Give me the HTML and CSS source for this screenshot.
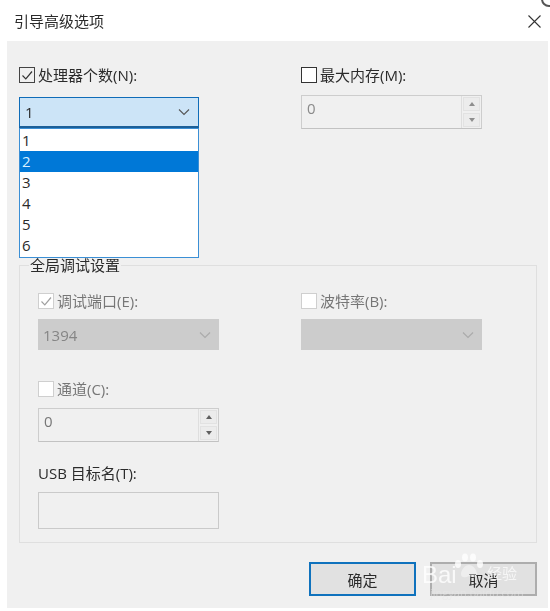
FILE: index.html
```html
<!DOCTYPE html>
<html lang="zh-CN">
<head>
<meta charset="utf-8">
<title>引导高级选项</title>
<link rel="stylesheet" href="styles.css">
</head>
<body>
<div class="dialog">
  <svg class="corner-mark" width="12" height="12" viewBox="0 0 12 12"><circle cx="11" cy="-1" r="7" fill="none" stroke="#555" stroke-width="2"/></svg>
  <header class="titlebar">
    <span class="title">引导高级选项</span>
    <svg class="close" width="13" height="13" viewBox="0 0 13 13"><path d="M0.5 0.5L12.5 12.5M12.5 0.5L0.5 12.5" stroke="#333" stroke-width="1.1" fill="none"/></svg>
  </header>
  <main class="panel">
    <div class="top-row">
      <div class="col-left">
        <label class="check-row">
          <span class="box box-on"><svg width="14" height="14" viewBox="0 0 14 14"><path d="M2.5 7.5L5.8 10.8L12 3.5" stroke="#333" stroke-width="1.2" fill="none"/></svg></span>
          <span>处理器个数(N):</span>
        </label>
        <div class="select select-open">
          <span>1</span>
          <svg width="12" height="8" viewBox="0 0 12 8"><path d="M1 1.5L6 6.5L11 1.5" stroke="#555" stroke-width="1.1" fill="none"/></svg>
        </div>
        <ul class="dropdown">
          <li>1</li>
          <li class="selected">2</li>
          <li>3</li>
          <li>4</li>
          <li>5</li>
          <li>6</li>
        </ul>
      </div>
      <div class="col-right">
        <label class="check-row">
          <span class="box box-dark"></span>
          <span>最大内存(M):</span>
        </label>
        <div class="spin spin-tall">
          <span class="spin-value">0</span>
          <span class="spin-btns">
            <span class="spin-btn"><i class="arrow-up"></i></span>
            <span class="spin-btn"><i class="arrow-down"></i></span>
          </span>
        </div>
      </div>
    </div>

    <fieldset class="group">
      <legend>全局调试设置</legend>
      <div class="group-grid">
        <div class="group-left">
          <label class="check-row muted">
            <span class="box box-muted"><svg width="14" height="14" viewBox="0 0 14 14"><path d="M2.5 7.5L5.8 10.8L12 3.5" stroke="#a0a0a0" stroke-width="1.2" fill="none"/></svg></span>
            <span>调试端口(E):</span>
          </label>
          <div class="select select-off">
            <span>1394</span>
            <svg width="12" height="8" viewBox="0 0 12 8"><path d="M1 1.5L6 6.5L11 1.5" stroke="#aaa" stroke-width="1.1" fill="none"/></svg>
          </div>
          <label class="check-row muted channel">
            <span class="box box-muted"></span>
            <span>通道(C):</span>
          </label>
          <div class="spin spin-channel">
            <span class="spin-value">0</span>
            <span class="spin-btns">
              <span class="spin-btn"><i class="arrow-up dark"></i></span>
              <span class="spin-btn"><i class="arrow-down dark"></i></span>
            </span>
          </div>
          <div class="usb-label">USB 目标名(T):</div>
          <div class="usb-field"></div>
        </div>
        <div class="group-right">
          <label class="check-row muted">
            <span class="box box-muted"></span>
            <span>波特率(B):</span>
          </label>
          <div class="select select-off">
            <span></span>
            <svg width="12" height="8" viewBox="0 0 12 8"><path d="M1 1.5L6 6.5L11 1.5" stroke="#aaa" stroke-width="1.1" fill="none"/></svg>
          </div>
        </div>
      </div>
    </fieldset>

    <footer class="actions">
      <button class="btn btn-primary" type="button">确定</button>
      <button class="btn" type="button">取消</button>
    </footer>
  </main>

  <div class="watermark">
    <svg class="paw" width="30" height="32" viewBox="0 0 30 32">
      <g fill="#fff" opacity="0.8">
        <ellipse cx="4" cy="11" rx="3" ry="4"/>
        <ellipse cx="11" cy="4.5" rx="3" ry="4"/>
        <ellipse cx="19" cy="4.5" rx="3" ry="4"/>
        <ellipse cx="26" cy="11" rx="3" ry="4"/>
        <path d="M15 12c4 0 8 5 8 9 0 4-4 4-8 2-4 2-8 2-8-2 0-4 4-9 8-9z" opacity="0.55"/>
      </g>
    </svg>
    <span class="wm-bai">Bai</span>
    <span class="wm-jy">经验</span>
    <span class="wm-url">jingyan.baidu.com</span>
  </div>
</div>
</body>
</html>
```
FILE: styles.css
```css
* { box-sizing: border-box; }
html, body { margin: 0; padding: 0; background: #fff; }
body {
  width: 550px;
  height: 611px;
  overflow: hidden;
  font-family: "Open Sans", "Noto Sans CJK SC", sans-serif;
  font-size: 15px;
  color: #2b2b2b;
}
.dialog { position: relative; width: 550px; height: 611px; filter: blur(0.35px); }
.corner-mark { position: absolute; right: 0; top: 0; }
.titlebar {
  height: 41px;
  display: flex;
  align-items: center;
  justify-content: space-between;
  padding: 0 9px 0 14px;
}
.title { font-size: 15px; line-height: 20px; }
.close { display: block; margin-top: 2px; }
.panel {
  margin-left: 7px;
  margin-right: 2px;
  height: 567px;
  background: #f0f0f0;
  padding: 26px 11px 0 12px;
}
.top-row { display: flex; gap: 102px; height: 188px; }
.col-left { width: 180px; position: relative; }
.col-right { width: 181px; }
.check-row {
  display: flex;
  align-items: center;
  gap: 3px;
  height: 16px;
  line-height: 15px;
  white-space: nowrap;
}
.muted { color: #767676; }
.box {
  width: 16px;
  height: 16px;
  flex: none;
  display: flex;
  align-items: center;
  justify-content: center;
  background: #fff;
  border: 1px solid #444;
}
.box-on { background: #f0f0f0; }
.box-dark { background: #fff; border-color: #333; }
.box-muted { border-color: #cfcfcf; background: #fff; }
.select {
  height: 31px;
  display: flex;
  align-items: center;
  justify-content: space-between;
  padding: 0 8px 0 5px;
}
.select-open {
  margin-top: 14px;
  background: #cce4f7;
  border: 1px solid #0f6cb8;
  border-bottom: 2px solid #1b5f98;
}
.select-off {
  margin-top: 10px;
  background: #cccccc;
  color: #858585;
  padding-left: 5px;
}
.dropdown {
  position: absolute;
  z-index: 2;
  left: 0;
  right: 0;
  top: 61px;
  margin: 0;
  padding: 1px 0 0;
  list-style: none;
  height: 130px;
  background: #fff;
  border: 1px solid #3b8fd5;
  line-height: 20px;
}
.dropdown li { height: 21px; padding-left: 2px; }
.dropdown .selected { background: #0078d7; color: #d8f0ff; }
.spin {
  display: flex;
  align-items: stretch;
  border: 1px solid #cdcdcd;
  border-bottom-color: #c2c2c2;
  background: #f0f0f0;
  color: #8a8a8a;
}
.spin-tall { margin-top: 12px; height: 34px; }
.spin-channel { margin-top: 11px; height: 34px; color: #777; }
.spin-value { flex: 1; padding-left: 5px; line-height: 25px; }
.spin-btns {
  width: 20px;
  display: flex;
  flex-direction: column;
  gap: 2px;
  padding: 1px;
  border-left: 1px solid #dedede;
}
.spin-btn {
  flex: 1;
  display: flex;
  align-items: center;
  justify-content: center;
  background: #ececec;
  border: 1px solid #e2e2e2;
}
.arrow-up, .arrow-down { width: 0; height: 0; border-left: 3.5px solid transparent; border-right: 3.5px solid transparent; }
.arrow-up { border-bottom: 4px solid #8e8e8e; }
.arrow-down { border-top: 4px solid #8e8e8e; }
.arrow-up.dark { border-bottom-color: #606060; }
.arrow-down.dark { border-top-color: #606060; }
.group {
  margin: 0;
  padding: 18px 18px 15px;
  height: 288px;
  border: 1px solid #dfdfdf;
  min-width: 0;
}
.group legend {
  margin-left: -9px;
  padding: 0 1px;
  line-height: 20px;
}
.group-grid { display: flex; gap: 82px; }
.group-left { width: 181px; }
.group-right { width: 181px; }
.channel { margin-top: 31px; }
.usb-label { margin-top: 24px; height: 16px; line-height: 15px; }
.usb-field {
  margin-top: 10px;
  height: 37px;
  border: 1px solid #cacaca;
  background: #f0f0f0;
}
.actions {
  display: flex;
  justify-content: flex-end;
  gap: 14px;
  margin-top: 19px;
}
.btn {
  width: 107px;
  height: 34px;
  padding: 0;
  background: #e1e1e1;
  border: 2px solid #adadad;
  font: inherit;
  color: #2b2b2b;
}
.btn-primary { border-color: #0f72bd; }
.watermark {
  position: absolute;
  left: 420px;
  top: 552px;
  width: 118px;
  height: 50px;
  color: #fff;
}
.paw { position: absolute; left: 34px; top: 1px; }
.wm-bai {
  position: absolute;
  left: 2px;
  top: 8px;
  font-size: 24px;
  line-height: 30px;
  font-family: "Liberation Sans", sans-serif;
  opacity: 0.8;
}
.wm-jy { position: absolute; left: 67px; top: 11px; font-size: 15px; line-height: 20px; opacity: 0.7; }
.wm-url { position: absolute; left: 10px; top: 34px; font-size: 11px; line-height: 14px; opacity: 0.55; color: #e8e8e8; }
```
